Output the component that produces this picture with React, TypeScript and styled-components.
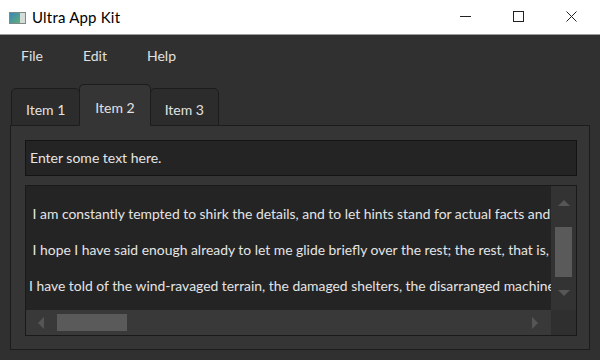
import React from 'react';
import styled, { createGlobalStyle } from 'styled-components';

const GlobalStyle = createGlobalStyle`
	html, body {
		margin: 0;
		padding: 0;
		background: #303030;
	}
	* {
		box-sizing: border-box;
	}
`;

const lines = [
	' I am constantly tempted to shirk the details, and to let hints stand for actual facts and arguments.',
	' I hope I have said enough already to let me glide briefly over the rest; the rest, that is, of what happened.',
	'I have told of the wind-ravaged terrain, the damaged shelters, the disarranged machinery and the rest.'
];

const tabs = ['Item 1', 'Item 2', 'Item 3'];

const App = () => {
	return (
		<>
			<GlobalStyle />
			<Window>
				<TitleBar>
					<AppIcon width="17" height="12" viewBox="0 0 17 12">
						<defs>
							<linearGradient id="ico" x1="0" y1="0" x2="1" y2="1">
								<stop offset="0" stopColor="#3d86b8" />
								<stop offset="1" stopColor="#5fae7a" />
							</linearGradient>
						</defs>
						<rect x="0.5" y="0.5" width="16" height="11" fill="#d6dcd8" stroke="#7d8a86" />
						<rect x="1" y="1" width="10" height="10" fill="url(#ico)" />
					</AppIcon>
					<Title>Ultra App Kit</Title>
					<Controls>
						<CaptionButton>
							<svg width="11" height="11" viewBox="0 0 11 11">
								<line x1="0" y1="5.5" x2="11" y2="5.5" stroke="#222" strokeWidth="1" />
							</svg>
						</CaptionButton>
						<CaptionButton>
							<svg width="11" height="11" viewBox="0 0 11 11">
								<rect x="0.5" y="0.5" width="10" height="10" fill="none" stroke="#222" strokeWidth="1" />
							</svg>
						</CaptionButton>
						<CaptionButton>
							<svg width="11" height="11" viewBox="0 0 11 11">
								<path d="M0.5 0.5 L10.5 10.5 M10.5 0.5 L0.5 10.5" stroke="#222" strokeWidth="1" />
							</svg>
						</CaptionButton>
					</Controls>
				</TitleBar>

				<MenuBar>
					<MenuItem>File</MenuItem>
					<MenuItem>Edit</MenuItem>
					<MenuItem>Help</MenuItem>
				</MenuBar>

				<TabArea>
					<TabBar>
						{tabs.map((t, i) => (
							<Tab key={t} active={i === 1}>{t}</Tab>
						))}
					</TabBar>
					<Pane>
						<LineEdit>Enter some text here.</LineEdit>
						<TextArea>
							<TextView>
								{lines.map((l, i) => (
									<TextLine key={i}>{l}</TextLine>
								))}
							</TextView>
							<VScroll>
								<ArrowUp />
								<VTrack>
									<VHandle />
								</VTrack>
								<ArrowDown />
							</VScroll>
							<HScroll>
								<ArrowLeft />
								<HTrack>
									<HHandle />
								</HTrack>
								<ArrowRight />
							</HScroll>
							<Corner />
						</TextArea>
					</Pane>
				</TabArea>
			</Window>
		</>
	);
};

export default App;

const Window = styled.div`
	width: 600px;
	height: 360px;
	background: #303030;
	display: flex;
	flex-direction: column;
	overflow: hidden;
	font-family: Lato, "Noto Sans", sans-serif;
	color: #e2e2e2;
`;

const TitleBar = styled.div`
	height: 35px;
	background: #ffffff;
	border-bottom: 1px solid #9c9c9c;
	display: flex;
	align-items: center;
	padding-left: 9px;
	flex-shrink: 0;
`;

const AppIcon = styled.svg`
	display: block;
	margin-right: 6px;
	margin-top: 1px;
`;

const Title = styled.span`
	font-size: 15px;
	letter-spacing: 0.2px;
	color: #000;
	flex: 1;
`;

const Controls = styled.div`
	display: flex;
	height: 100%;
	padding-right: 2px;
`;

const CaptionButton = styled.div`
	width: 53px;
	height: 100%;
	display: flex;
	align-items: center;
	justify-content: center;
	padding-bottom: 2px;

	svg {
		display: block;
	}
`;

const MenuBar = styled.div`
	height: 40px;
	display: flex;
	align-items: center;
	padding-left: 1px;
	flex-shrink: 0;
`;

const MenuItem = styled.span`
	font-size: 14px;
	padding: 0 20px;
	color: #e0e0e0;
`;

const TabArea = styled.div`
	margin: 9px 0 0 10px;
	width: 580px;
	display: flex;
	flex-direction: column;
`;

const TabBar = styled.div`
	display: flex;
	align-items: flex-end;
	height: 42px;
	padding-left: 1px;
	position: relative;
	z-index: 1;
	margin-bottom: -1px;
`;

const Tab = styled.div<{ active: boolean }>`
	height: ${props => props.active ? '42px' : '38px'};
	padding: 0 ${props => props.active ? '15px' : '14px'};
	padding-top: 4px;
	margin-right: -1px;
	position: relative;
	z-index: ${props => props.active ? 1 : 0};
	background: ${props => props.active ? '#353535' : '#2c2c2c'};
	border: 1px solid #1c1c1c;
	border-bottom: ${props => props.active ? '1px solid #353535' : '1px solid #1c1c1c'};
	border-radius: 5px 5px 0 0;
	font-size: 14px;
	display: flex;
	align-items: center;
	color: #e2e2e2;
`;

const Pane = styled.div`
	height: 225px;
	background: #353535;
	border: 1px solid #1c1c1c;
	padding: 14px 12px 13px 14px;
	display: flex;
	flex-direction: column;
	gap: 9px;
`;

const LineEdit = styled.div`
	height: 36px;
	background: #242424;
	border: 1px solid #141414;
	font-size: 14px;
	display: flex;
	align-items: center;
	padding-left: 4px;
	padding-bottom: 1px;
	color: #e4e4e4;
	flex-shrink: 0;
`;

const TextArea = styled.div`
	flex: 1;
	min-height: 0;
	border: 1px solid #1a1a1a;
	background: #242424;
	display: grid;
	grid-template-columns: minmax(0, 1fr) 25px;
	grid-template-rows: minmax(0, 1fr) 25px;
	overflow: hidden;
`;

const TextView = styled.div`
	overflow: hidden;
	padding: 14px 0 0 3px;
	font-size: 13.9px;
	color: #e4e4e4;
`;

const TextLine = styled.div`
	white-space: pre;
	height: 36px;
	line-height: 28px;
`;

const VScroll = styled.div`
	background: #333333;
	display: flex;
	flex-direction: column;
	align-items: center;
	overflow: hidden;
`;

const VTrack = styled.div`
	flex: 1;
	min-height: 0;
	width: 100%;
	padding: 21px 4px 0 4px;
`;

const VHandle = styled.div`
	height: 50px;
	background: #5a5a5a;
`;

const HScroll = styled.div`
	background: #393939;
	display: flex;
	align-items: center;
`;

const HTrack = styled.div`
	flex: 1;
	height: 100%;
	padding: 4px 0 4px 13px;
`;

const HHandle = styled.div`
	width: 70px;
	height: 100%;
	background: #5a5a5a;
`;

const Corner = styled.div`
	background: #2f2f2f;
`;

const ArrowUp = styled.div`
	margin-top: 14px;
	width: 0;
	height: 0;
	flex-shrink: 0;
	border-left: 6px solid transparent;
	border-right: 6px solid transparent;
	border-bottom: 6px solid #565656;
`;

const ArrowDown = styled.div`
	margin-bottom: 14px;
	width: 0;
	height: 0;
	flex-shrink: 0;
	border-left: 6px solid transparent;
	border-right: 6px solid transparent;
	border-top: 6px solid #565656;
`;

const ArrowLeft = styled.div`
	margin-left: 12px;
	width: 0;
	height: 0;
	border-top: 6px solid transparent;
	border-bottom: 6px solid transparent;
	border-right: 6px solid #565656;
`;

const ArrowRight = styled.div`
	margin-right: 13px;
	width: 0;
	height: 0;
	border-top: 6px solid transparent;
	border-bottom: 6px solid transparent;
	border-left: 6px solid #565656;
`;
